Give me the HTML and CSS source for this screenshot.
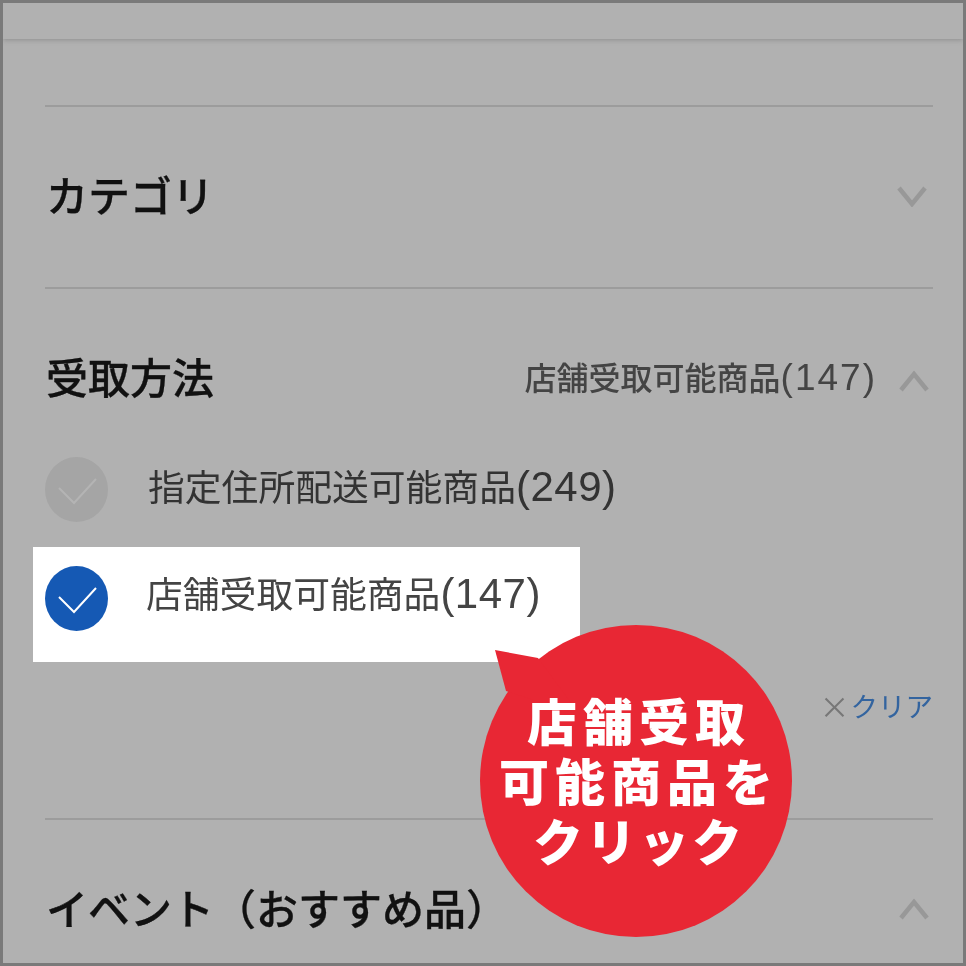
FILE: index.html
```html
<!DOCTYPE html>
<html lang="ja">
<head>
	<meta charset="UTF-8">
	<title>受取方法</title>
	<link rel="stylesheet" href="styles.css">
</head>
<body>
	<main class="frame">
		<div class="topbar"></div>
		<div class="filters">
			<section class="group">
				<div class="head">
					<h2>カテゴリ</h2>
					<svg class="chev" width="32" height="22" viewBox="0 0 32 22"><path d="M3 3 L16 19 L29 3"/></svg>
				</div>
			</section>
			<section class="group">
				<div class="head">
					<h2>受取方法</h2>
					<span class="summary">店舗受取可能商品<span class="num">(147)</span></span>
					<svg class="chev up" width="32" height="24" viewBox="0 0 32 24"><path d="M3 21 L16 5 L29 21"/></svg>
				</div>
				<ul class="options">
					<li class="option">
						<svg class="check off" width="63" height="65" viewBox="0 0 63 65"><ellipse cx="31.5" cy="32.5" rx="31.5" ry="32.5"/><path d="M14 31 L29 46 L51 22"/></svg>
						<span class="label">指定住所配送可能商品<span class="num">(249)</span></span>
					</li>
					<li class="option picked">
						<svg class="check" width="63" height="65" viewBox="0 0 63 65"><ellipse cx="31.5" cy="32.5" rx="31.5" ry="32.5"/><path d="M14 31 L29 46 L51 22"/></svg>
						<span class="label">店舗受取可能商品<span class="num">(147)</span></span>
					</li>
				</ul>
				<div class="clear"><span class="x">×</span><a>クリア</a></div>
			</section>
			<section class="group">
				<div class="head">
					<h2>イベント（おすすめ品）</h2>
					<svg class="chev up" width="32" height="24" viewBox="0 0 32 24"><path d="M3 21 L16 5 L29 21"/></svg>
				</div>
			</section>
		</div>
		<div class="bubble">
			<svg width="312" height="312" viewBox="0 0 312 312"><circle cx="156" cy="156" r="156"/><path d="M15 25 L58 33 L100 90 L26 66 Z"/></svg>
			<p>店舗受取<br>可能商品を<br><span class="tight">クリック</span></p>
		</div>
	</main>
</body>
</html>
```

FILE: styles.css
```css
body {
	margin: 0;
	font-family: "Noto Sans CJK JP", "Liberation Sans", sans-serif;
}
.frame {
	background: #b1b1b1;
	border: 3px solid #7a7a7a;
	box-sizing: border-box;
	height: 966px;
	overflow: hidden;
	position: relative;
	width: 966px;
}
.topbar {
	box-shadow: 0 1px 5px #8f8f8f;
	height: 36px;
}
.filters {
	filter: blur(0.6px);
	padding: 66px 30px 0 42px;
}
.group {
	border-top: 2px solid #9c9c9c;
	padding: 60px 0 62px;
}
.head {
	align-items: center;
	display: flex;
	height: 58px;
}
.head h2 {
	color: #111;
	flex: 1;
	font-size: 42px;
	font-weight: 500;
	-webkit-text-stroke: 0.3px #111;
	margin: 0 0 6px 1px;
}
.summary {
	color: #444;
	font-size: 32px;
	font-weight: 500;
	margin: 0 21px 4px 0;
}
.num {
	font-family: "Liberation Sans", sans-serif;
	line-height: 1;
}
.summary .num {
	font-size: 37px;
	letter-spacing: 2px;
}
.chev {
	fill: none;
	margin-right: 5px;
	stroke: #989898;
	stroke-width: 4.5;
}
.chev.up {
	margin-right: 3px;
	margin-top: 6px;
}
.group:last-child .chev {
	margin-top: 0;
}
.options {
	list-style: none;
	margin: 50px 0 0;
	padding: 0;
}
.option {
	align-items: center;
	color: #333;
	display: flex;
	font-size: 36.8px;
	gap: 40px;
}
.label {
	line-height: 53px;
	margin-bottom: 8px;
}
.label .num {
	font-size: 42px;
	letter-spacing: 0.5px;
}
.option.picked {
	align-items: flex-start;
	background: #fff;
	box-sizing: border-box;
	color: #444;
	gap: 38px;
	height: 115px;
	margin: 25px 0 0 -12px;
	padding: 19px 0 0 12px;
	width: 547px;
}
.check {
	fill: #1559b4;
	flex: none;
}
.check path {
	fill: none;
	stroke: #fff;
	stroke-width: 2;
}
.check.off {
	fill: #a5a5a5;
}
.check.off path {
	stroke: #b4b4b4;
}
.clear {
	align-items: center;
	display: flex;
	font-size: 27.5px;
	height: 40px;
	justify-content: flex-end;
	margin: 23px 0 31px;
}
.clear .x {
	color: #777;
	font-size: 30px;
	margin-right: 1px;
}
.clear a {
	color: #33649f;
}
.bubble {
	align-items: center;
	display: flex;
	height: 312px;
	justify-content: center;
	left: 477px;
	position: absolute;
	top: 622px;
	width: 312px;
}
.bubble svg {
	fill: #e82734;
	left: 0;
	position: absolute;
	top: 0;
}
.bubble p {
	color: #fff;
	font-size: 50px;
	font-weight: 900;
	letter-spacing: 6px;
	line-height: 60px;
	margin: -4px 0 0 6px;
	position: relative;
	text-align: center;
}
.bubble .tight {
	letter-spacing: 3px;
}
```
